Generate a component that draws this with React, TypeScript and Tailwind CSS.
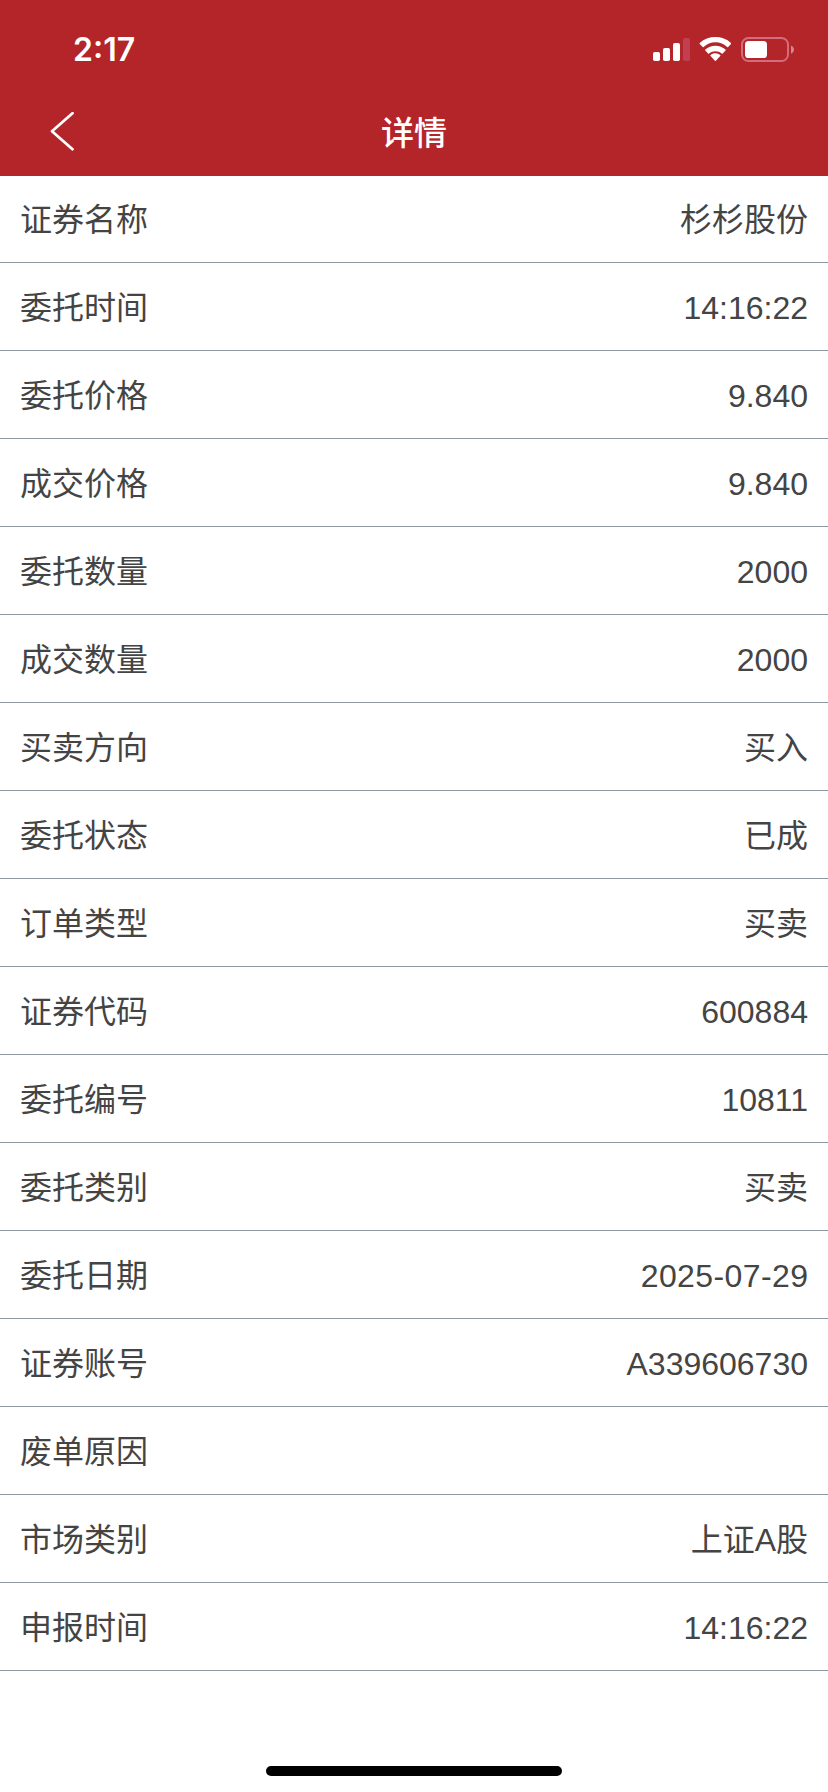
import React from "react";

const rows = [
  { label: "证券名称", value: "杉杉股份" },
  { label: "委托时间", value: "14:16:22" },
  { label: "委托价格", value: "9.840" },
  { label: "成交价格", value: "9.840" },
  { label: "委托数量", value: "2000" },
  { label: "成交数量", value: "2000" },
  { label: "买卖方向", value: "买入" },
  { label: "委托状态", value: "已成" },
  { label: "订单类型", value: "买卖" },
  { label: "证券代码", value: "600884" },
  { label: "委托编号", value: "10811" },
  { label: "委托类别", value: "买卖" },
  { label: "委托日期", value: "2025-07-29", className: "tracking-[0.4px] -mr-[0.4px]" },
  { label: "证券账号", value: "A339606730" },
  { label: "废单原因", value: "" },
  { label: "市场类别", value: "上证A股" },
  { label: "申报时间", value: "14:16:22" },
];

const SignalIcon = () => (
  <svg className="w-[38px] h-[26px]" viewBox="0 0 38 26" fill="#fff">
    <rect x="1" y="15" width="7" height="9" rx="1.8" />
    <rect x="11" y="11" width="7" height="13" rx="1.8" />
    <rect x="21" y="6" width="7" height="18" rx="1.8" />
    <rect x="31" y="1" width="7" height="23" rx="1.8" fill="#c03f50" />
  </svg>
);

const WifiIcon = () => (
  <svg className="w-8 h-[26px]" viewBox="0.1 0 31 25" fill="#fff">
    <path d="M16 5.1c4.4 0 8.4 1.7 11.4 4.6.3.3.6.3.9 0l2.9-3c.3-.3.3-.7 0-1C27.1 1.9 21.7 0 16 0S4.9 1.9.8 5.7c-.3.3-.3.7 0 1l2.9 3c.3.3.6.3.9 0C7.6 6.8 11.6 5.1 16 5.1z" />
    <path d="M16 13.6c2.2 0 4.4.8 6.1 2.3.3.3.7.3 1 0l2.7-2.8c.3-.3.3-.7 0-1C23.1 9.6 19.7 8.3 16 8.3s-7.1 1.3-9.8 3.8c-.3.3-.3.7 0 1l2.7 2.8c.3.3.7.3 1 0 1.7-1.5 3.9-2.3 6.1-2.3z" />
    <path d="M20.7 18.3c.3-.3.3-.7 0-1A7.8 7.8 0 0 0 16 15.7c-1.800 0-3.500.6-4.700 1.600-.3.300-.3.700 0 1l4.200 4.600c.3.300.7.300 1 0z" />
  </svg>
);

const BatteryIcon = () => (
  <svg className="w-[54px] h-[26px]" viewBox="0 0 54 26" fill="#fff">
    <rect x="1" y="1" width="46" height="23" rx="6.5" fill="none" stroke="#d16d7c" strokeWidth="2" />
    <rect x="4" y="4" width="22" height="17" rx="3.6" />
    <path d="M50 8.5c1.8.7 3 2.3 3 4.1s-1.2 3.4-3 4.1z" fill="#d9848f" />
  </svg>
);

const App = () => {
  return (
    <div className="flex flex-col w-[828px] h-[1792px] bg-white text-[#444444] font-['Liberation_Sans','Noto_Sans_CJK_SC',sans-serif]">
      <header className="h-[176px] bg-[#b32529] text-white">
        {/* Status bar */}
        <div className="flex h-[88px] justify-between pl-[73px] pr-[33px]">
          <span className="pt-[26px] font-['Inter',sans-serif] text-[32px] leading-[48px] font-semibold">
            2:17
          </span>
          <div className="flex pt-[37px]">
            <SignalIcon />
            <div className="ml-[9px]">
              <WifiIcon />
            </div>
            <div className="ml-[10px]">
              <BatteryIcon />
            </div>
          </div>
        </div>

        {/* Title bar */}
        <div className="grid h-[88px] grid-cols-3 items-center">
          <button aria-label="返回" className="pl-[50px]">
            <svg className="h-10 w-6" viewBox="0 0 24 40" fill="none" stroke="#fff" strokeWidth="2.8" strokeLinecap="round" strokeLinejoin="round">
              <path d="M22.5 1.2 2 19.2 22.5 37.2" />
            </svg>
          </button>
          <h1 className="pt-[3px] text-center text-[33px] leading-[48px] font-medium">详情</h1>
        </div>
      </header>

      <ul>
        {rows.map((row) => (
          <li
            key={row.label}
            className="flex h-[88px] first:h-[87px] items-center justify-between border-b border-[#8e99a3] px-5 pt-0.5 text-[32px] leading-[48px]"
          >
            <span>{row.label}</span>
            <span className={row.className}>{row.value}</span>
          </li>
        ))}
      </ul>

      {/* Home indicator */}
      <div className="mt-auto mb-4 h-[10px] w-[296px] self-center rounded-full bg-black" />
    </div>
  );
};

export default App;
